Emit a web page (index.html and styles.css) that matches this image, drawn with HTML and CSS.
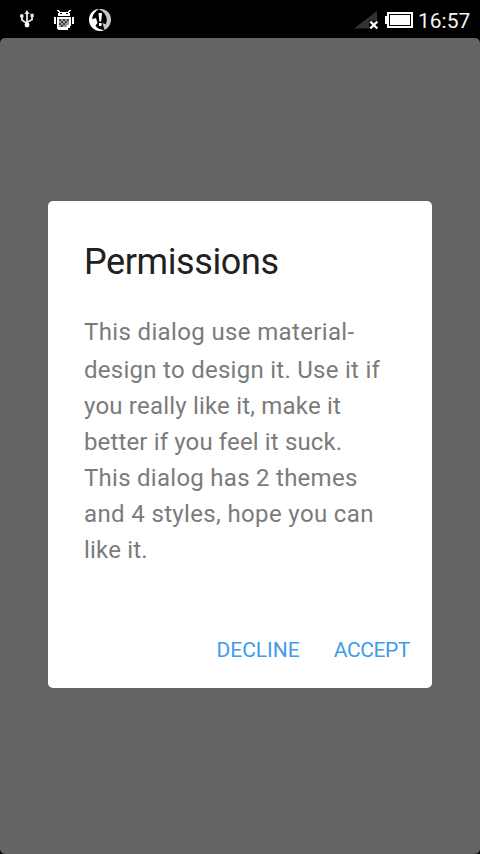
FILE: index.html
```
<!DOCTYPE html>
<html lang="en">
<head>
<meta charset="utf-8">
<title>Permissions</title>
<link rel="stylesheet" href="styles.css">
</head>
<body>
<header class="status">
  <div class="notifications">
    <svg class="usb" width="16" height="20" viewBox="0 0 16 20" fill="none" stroke="#e8e8e8" stroke-width="1.800"><path d="M8 3v13M8 13.500L3 10V6.500M8 12.500l5-3V6.500"/><path d="M8 0l2.500 4h-5zM11.500 3.800h3.200v3.200h-3.200z" fill="#e8e8e8" stroke="none"/><circle cx="2.800" cy="6" r="1.900" fill="#e8e8e8" stroke="none"/><circle cx="8" cy="15" r="2.400" fill="#fff" stroke="none"/></svg>
    <svg class="android" width="20" height="20" viewBox="0 0 20 20" shape-rendering="crispEdges"><path fill="#fff" d="M3 0h2v1h1v1h8V1h1V0h2v1h-1v1h-1v1h1v3H4V3h1V2H4V1H3zM0 7h2v7H0zM18 7h2v7h-2zM3 7h14v9h-1v2h-2v2H4v-1H3z"/><path fill="#000" d="M6 3h2v1H6zM12 3h2v1h-2z"/><path fill="#999" d="M5 9h10v6h-2v2H5z"/><path fill="#444" d="M5 9h2v2H5zM9 9h2v2H9zM13 9h2v2h-2zM7 11h2v2H7zM11 11h2v2h-2zM5 13h2v2H5zM9 13h2v2H9zM7 15h2v2H7z"/></svg>
    <svg class="sync" width="22" height="22" viewBox="0 0 22 22"><path fill="#fff" d="M10 0C4 .5 0 5 0 11c0 6 5 11 11 11 2 0 3-.3 4-1-4-.3-7-1.500-8.500-4.500L8.500 14 7 9 0 11l3.200-.5C3.300 6 6 2.500 10 0z"/><path fill="#c8c8c8" d="M9.500 0C17-.5 22 4 22 10.500c0 5-3 9-6.500 10.500l-2-7 3.200 1.200C19 11 18 4 9.500 0z"/><path fill="#fff" stroke="#000" stroke-width="1" paint-order="stroke" d="M9.500 4h3.500l-.8 8.500h-1.900zM10 14h2.600v3H10z"/></svg>
  </div>
  <div class="system">
    <svg class="signal" width="25" height="20" viewBox="0 0 25 20"><path fill="#333" d="M0 17.500L23 0v9.500h-8v8z"/><path stroke="#fff" stroke-width="2.400" d="M16.300 10.500l7 7M23.300 10.500l-7 7"/></svg>
    <svg class="battery" width="28" height="16" viewBox="0 0 28 16" shape-rendering="crispEdges"><path fill="#fff" d="M2 0h26v16H2v-4H0V4h2z"/><path fill="#000" d="M4 2h22v12H4z"/><path fill="#fff" d="M5 3h20v10H5z"/></svg>
    <span class="clock">16:57</span>
  </div>
</header>
<main class="screen">
  <section class="dialog" role="dialog">
    <h1 class="title">Permissions</h1>
    <p class="message">
      <span class="line first">This dialog use material-</span>
      <span class="line normal">design to design it. Use it if</span>
      <span class="line tight">you really like it, make it</span>
      <span class="line tighter">better if you feel it suck.</span>
      <span class="line normal">This dialog has 2 themes</span>
      <span class="line">and 4 styles, hope you can</span>
      <span class="line tight">like it.</span>
    </p>
    <div class="actions"><button class="action">DECLINE</button><button class="action accept">ACCEPT</button></div>
  </section>
</main>
</body>
</html>
```
FILE: styles.css
```
* { box-sizing: border-box; }
body {
  margin: 0;
  height: 854px;
  overflow: hidden;
  display: flex;
  flex-direction: column;
  background: #000;
  font-family: Roboto, "Liberation Sans", sans-serif;
}
.status {
  height: 38px;
  display: flex;
  justify-content: space-between;
  padding: 0 10px 0 19px;
}
.notifications, .system { display: flex; align-items: flex-start; }
.usb { margin-top: 10px; }
.android { margin: 10px 0 0 19px; }
.sync { margin: 9px 0 0 15px; }
.signal { margin-top: 11px; }
.battery { margin: 12px 5px 0 6px; }
.clock {
  width: 52px;
  white-space: nowrap;
  font-size: 21px;
  line-height: 42px;
  color: #f4f4f4;
}
.screen {
  height: 816px;
  padding: 163px 48px 0;
  border-radius: 5px;
  background: #646464;
}
.dialog {
  height: 487px;
  padding: 36px 22px 0 36px;
  border-radius: 5px;
  background: #fff;
}
.title {
  margin: 0;
  font-size: 36px;
  font-weight: 400;
  line-height: 50px;
  letter-spacing: -.4px;
  color: #212121;
}
.message {
  margin: 27px 0 0;
  font-size: 24px;
  line-height: 36px;
  color: #7b7b7b;
  letter-spacing: .36px;
}
.line { display: block; white-space: nowrap; }
.first { margin-bottom: 2px; }
.normal { letter-spacing: .27px; }
.tight { letter-spacing: .2px; }
.tighter { letter-spacing: .14px; }
.actions {
  display: flex;
  justify-content: flex-end;
  gap: 34px;
  margin-top: 64px;
}
.action {
  padding: 0;
  border: 0;
  background: none;
  font: 21px/36px Roboto, "Liberation Sans", sans-serif;
  color: #3f9beb;
}
.accept { letter-spacing: -.4px; }
```
